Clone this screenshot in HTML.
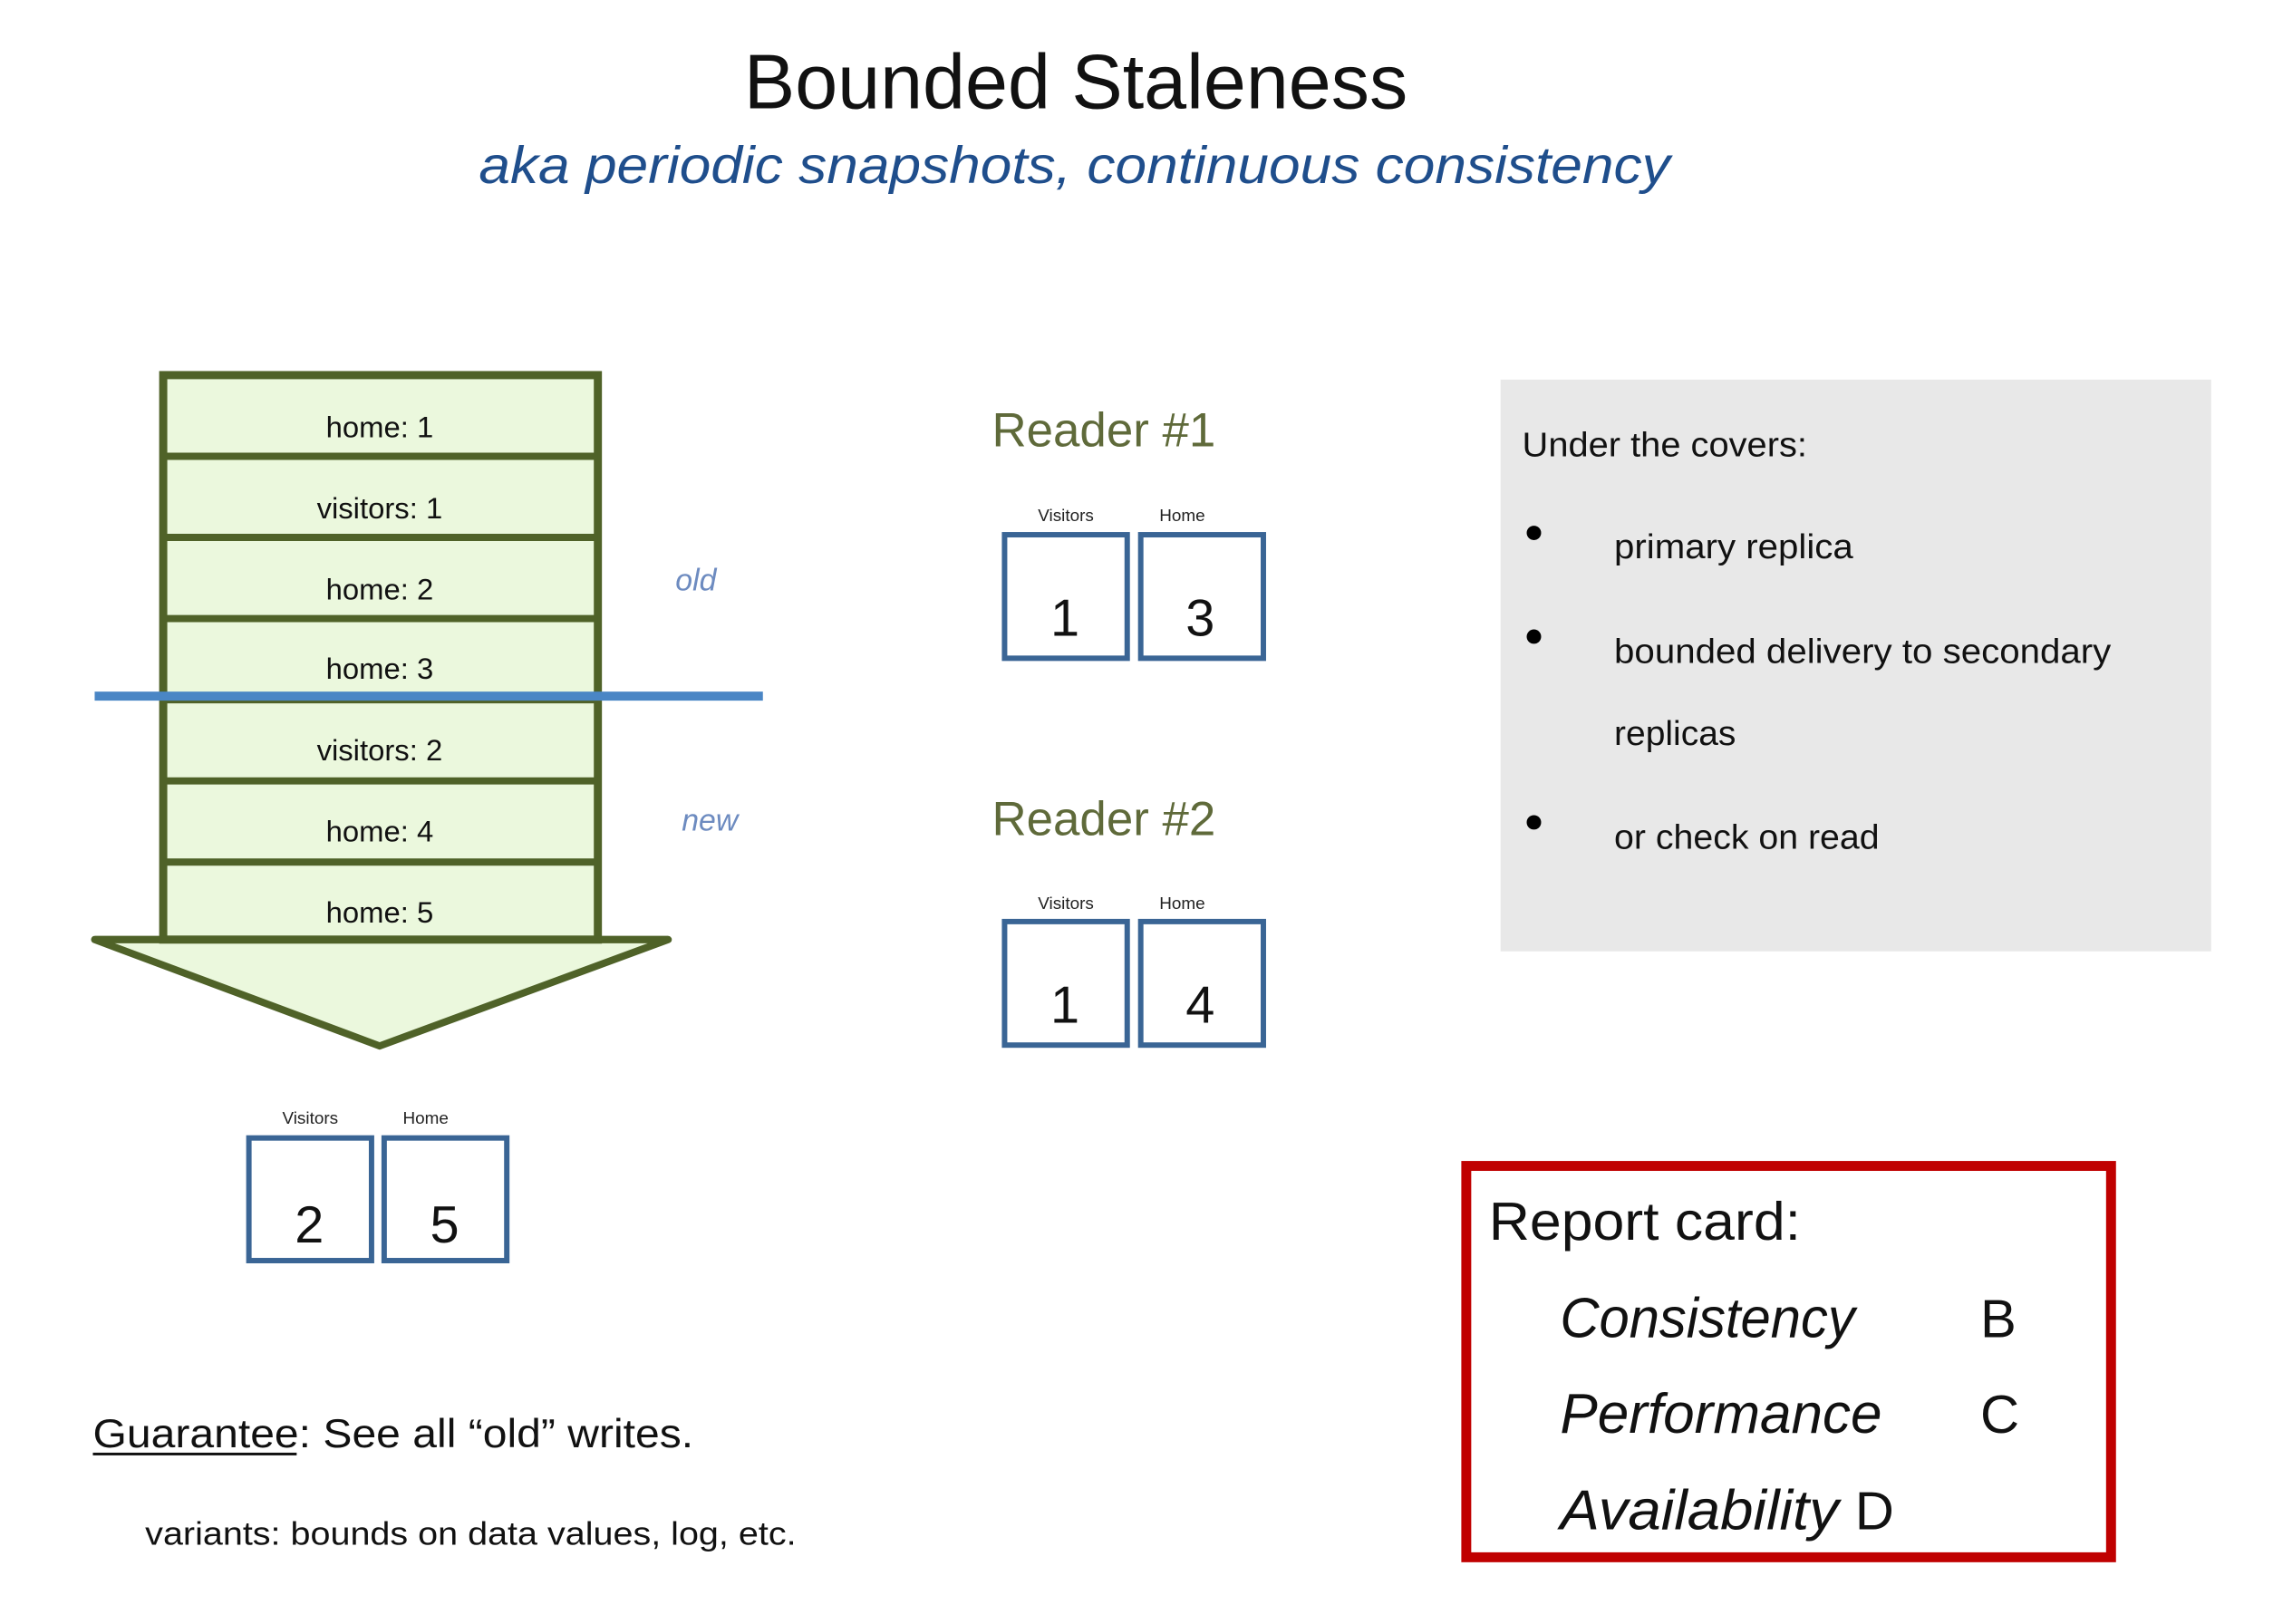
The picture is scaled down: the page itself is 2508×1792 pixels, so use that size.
<!DOCTYPE html>
<html><head><meta charset="utf-8"><style>html,body{margin:0;padding:0;background:#fff}svg{display:block}</style></head>
<body>
<svg width="2508" height="1792" viewBox="0 0 2508 1792" xmlns="http://www.w3.org/2000/svg" font-family="Liberation Sans, sans-serif">
<rect width="2508" height="1792" fill="#fff"/>
<g transform="scale(0.995)">
<text x="825" y="120" font-size="86" fill="#111" textLength="736" lengthAdjust="spacingAndGlyphs">Bounded Staleness</text>
<text x="531" y="203" font-size="58" font-style="italic" fill="#1f4e8c" textLength="1321" lengthAdjust="spacingAndGlyphs">aka periodic snapshots, continuous consistency</text>

<polygon points="105,1042 741,1042 421,1160" fill="#ebf8dd" stroke="#4f6228" stroke-width="8" stroke-linejoin="round"/>
<rect x="181" y="416" width="482" height="626" fill="#ebf8dd" stroke="#4f6228" stroke-width="9"/>
<g stroke="#4f6228" stroke-width="8">
<line x1="181" y1="506" x2="663" y2="506"/><line x1="181" y1="596" x2="663" y2="596"/>
<line x1="181" y1="686" x2="663" y2="686"/><line x1="181" y1="776" x2="663" y2="776"/>
<line x1="181" y1="866" x2="663" y2="866"/><line x1="181" y1="956" x2="663" y2="956"/>
<line x1="105" y1="1042" x2="741" y2="1042"/>
</g>
<g font-size="33" fill="#111" text-anchor="middle">
<text x="421" y="485">home: 1</text><text x="421" y="575">visitors: 1</text>
<text x="421" y="665">home: 2</text><text x="421" y="753">home: 3</text>
<text x="421" y="843">visitors: 2</text><text x="421" y="933">home: 4</text>
<text x="421" y="1023">home: 5</text>
</g>
<rect x="105" y="767" width="741" height="10" fill="#4a86c5"/>
<text x="749" y="655" font-size="34" font-style="italic" fill="#6d8bc0">old</text>
<text x="756" y="921" font-size="34" font-style="italic" fill="#6d8bc0">new</text>

<g fill="#fff" stroke="#3a6595" stroke-width="6">
<rect x="276" y="1262" width="136" height="136"/><rect x="426" y="1262" width="136" height="136"/>
<rect x="1114" y="593" width="136" height="137"/><rect x="1265" y="593" width="136" height="137"/>
<rect x="1114" y="1022" width="136" height="137"/><rect x="1265" y="1022" width="136" height="137"/>
</g>
<g font-size="19" fill="#222" text-anchor="middle">
<text x="344" y="1246">Visitors</text><text x="472" y="1246">Home</text>
<text x="1182" y="578">Visitors</text><text x="1311" y="578">Home</text>
<text x="1182" y="1008">Visitors</text><text x="1311" y="1008">Home</text>
</g>
<g font-size="58" fill="#111" text-anchor="middle">
<text x="343" y="1378">2</text><text x="493" y="1378">5</text>
<text x="1181" y="705">1</text><text x="1331" y="705">3</text>
<text x="1181" y="1134">1</text><text x="1331" y="1134">4</text>
</g>
<text x="1100" y="495" font-size="53" fill="#5f6a3a" textLength="248" lengthAdjust="spacingAndGlyphs">Reader #1</text>
<text x="1100" y="926" font-size="53" fill="#5f6a3a" textLength="248" lengthAdjust="spacingAndGlyphs">Reader #2</text>

<rect x="1664" y="421" width="788" height="634" fill="#e8e8e8"/>
<g font-size="38" fill="#111">
<text x="1688" y="506" textLength="316" lengthAdjust="spacingAndGlyphs">Under the covers:</text>
<text x="1790" y="619" textLength="265" lengthAdjust="spacingAndGlyphs">primary replica</text>
<text x="1790" y="735" textLength="551" lengthAdjust="spacingAndGlyphs">bounded delivery to secondary</text>
<text x="1790" y="826" textLength="135" lengthAdjust="spacingAndGlyphs">replicas</text>
<text x="1790" y="941" textLength="294" lengthAdjust="spacingAndGlyphs">or check on read</text>
</g>
<g fill="#000"><circle cx="1701" cy="591" r="8"/><circle cx="1701" cy="706" r="8"/><circle cx="1701" cy="912" r="8"/></g>

<rect x="1626" y="1293" width="715" height="434" fill="#fff" stroke="#c00000" stroke-width="11"/>
<text x="1651" y="1375" font-size="60" fill="#111" textLength="346" lengthAdjust="spacingAndGlyphs">Report card:</text>
<g font-size="62" fill="#111" font-style="italic">
<text x="1730" y="1483" textLength="327" lengthAdjust="spacingAndGlyphs">Consistency</text>
<text x="1730" y="1589" textLength="357" lengthAdjust="spacingAndGlyphs">Performance</text>
<text x="1730" y="1696" textLength="309" lengthAdjust="spacingAndGlyphs">Availability</text>
</g>
<g font-size="60" fill="#111">
<text x="2196" y="1483">B</text><text x="2196" y="1589">C</text><text x="2057" y="1696">D</text>
</g>

<text x="103" y="1605" font-size="45" fill="#111" textLength="666" lengthAdjust="spacingAndGlyphs">Guarantee: See all “old” writes.</text>
<rect x="103" y="1611" width="226" height="3" fill="#111"/>
<text x="161" y="1713" font-size="36" fill="#111" textLength="722" lengthAdjust="spacingAndGlyphs">variants: bounds on data values, log, etc.</text>
</g>
</svg>
</body></html>
